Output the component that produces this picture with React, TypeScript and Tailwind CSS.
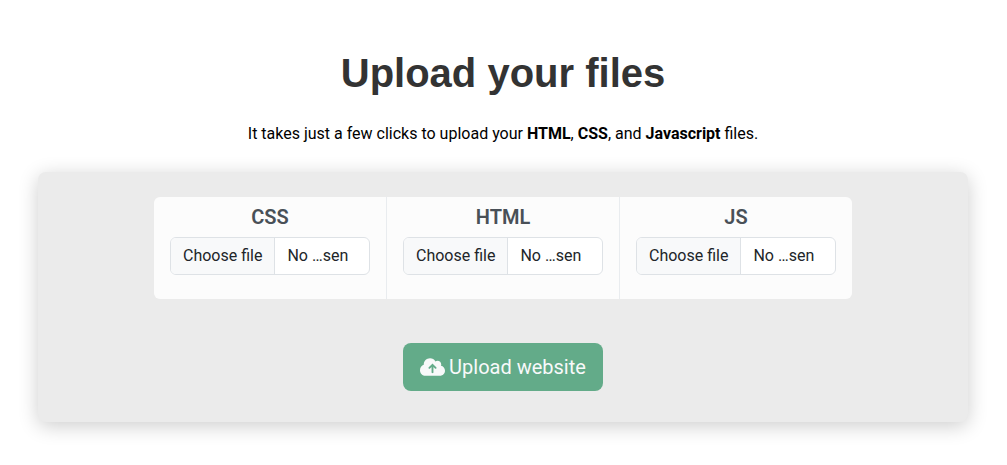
import { useState } from "react";
import { FaCloudArrowUp } from "react-icons/fa6";

const slots = [
  { id: "css", label: "CSS", accept: ".css" },
  { id: "html", label: "HTML", accept: ".html" },
  { id: "js", label: "JS", accept: ".js" },
];

// keep the start and the end of long names, cut the middle
function shorten(name: string) {
  if (name.length <= 8) return name;
  return `${name.slice(0, 3)}…${name.slice(-3)}`;
}

function FileSlot({ id, label, accept }: { id: string; label: string; accept: string }) {
  const [name, setName] = useState("No file chosen");

  return (
    <div className="flex flex-col items-center px-4 pt-2 pb-6">
      <label htmlFor={id} className="text-xl leading-6 font-semibold text-[#495057]">
        {label}
      </label>
      <div className="relative mt-2 flex w-[200px] overflow-hidden rounded-md border border-[#dee2e6] bg-white text-base leading-6 text-[#212529]">
        <span className="shrink-0 border-r border-[#dee2e6] bg-[#f8f9fa] px-3 py-1.5">
          Choose file
        </span>
        <span className="px-3 py-1.5 whitespace-nowrap">{shorten(name)}</span>
        <input
          id={id}
          type="file"
          accept={accept}
          onChange={(e) => setName(e.target.files?.[0]?.name ?? "No file chosen")}
          className="absolute inset-0 h-full w-full cursor-pointer opacity-0"
        />
      </div>
    </div>
  );
}

export default function App() {
  return (
    <main className="pt-[49px] pr-[39px] pb-10 pl-[38px] font-['Roboto',sans-serif]">
      <header className="text-center">
        <h1 className="font-['Liberation_Sans',sans-serif] text-[40px] leading-12 font-bold text-[#333]">
          Upload your files
        </h1>
        <p className="mt-[25px] text-base leading-6 text-black">
          It takes just a few clicks to upload your <strong>HTML</strong>, <strong>CSS</strong>, and{" "}
          <strong>Javascript</strong> files.
        </p>
      </header>

      <form
        onSubmit={(e) => e.preventDefault()}
        className="mt-[26px] flex flex-col items-center rounded-lg bg-[#ebebeb] pt-[25px] pb-[31px] shadow-[0_4px_20px_rgba(0,0,0,0.2)]"
      >
        <div className="flex flex-wrap justify-center divide-x divide-[#e9ecef] overflow-hidden rounded-md bg-[#fcfcfc]">
          {slots.map((slot) => (
            <FileSlot key={slot.id} {...slot} />
          ))}
        </div>

        <button
          type="submit"
          className="mt-11 flex h-12 w-[200px] items-center justify-center gap-1 rounded-lg bg-[#63ab89] text-xl text-[#f8f9fa]"
        >
          <FaCloudArrowUp className="h-5 w-[25px]" />
          Upload website
        </button>
      </form>
    </main>
  );
}
